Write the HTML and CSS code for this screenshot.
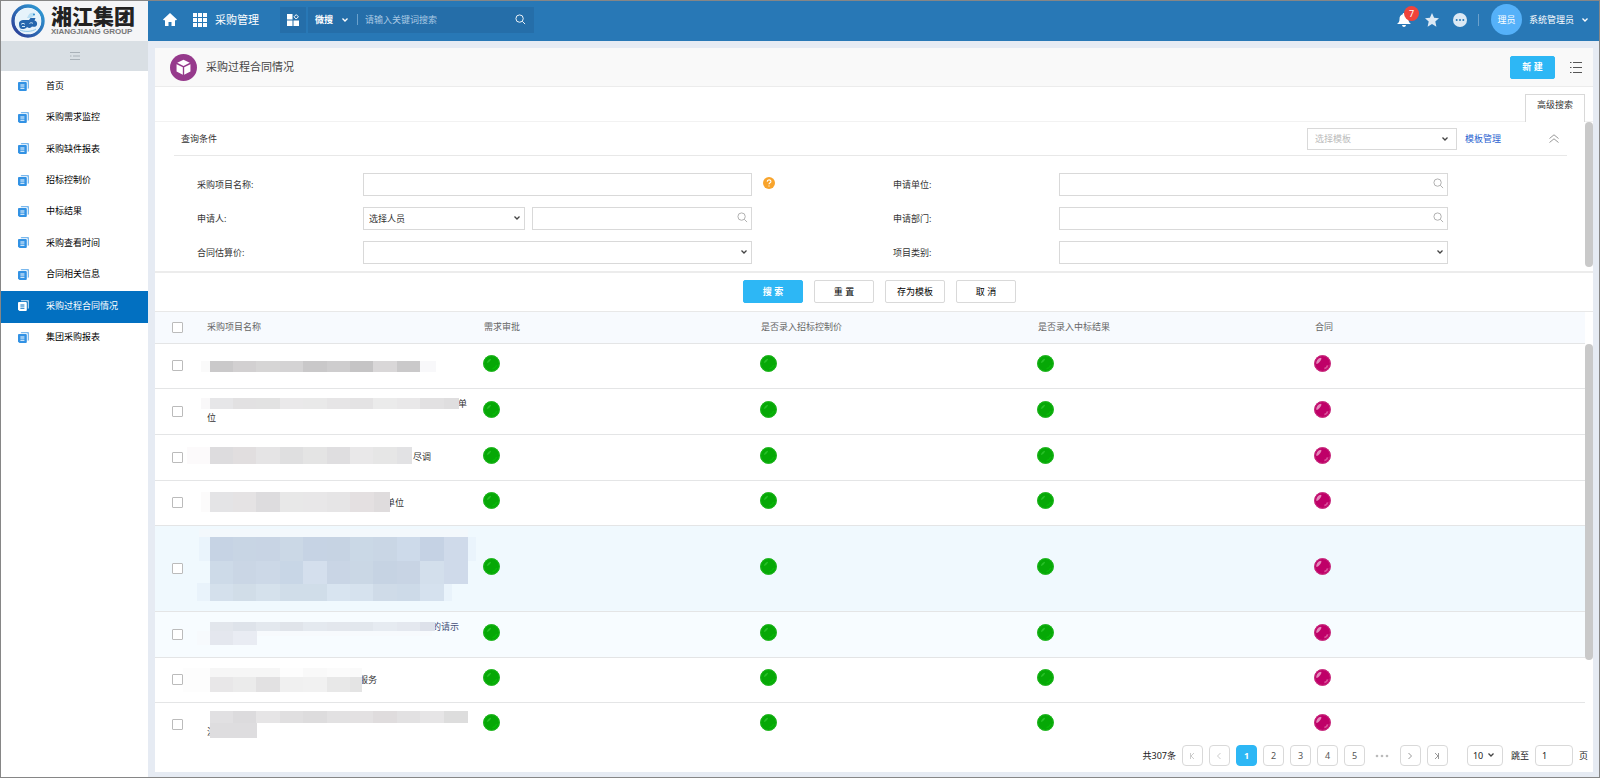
FILE: index.html
```html
<!DOCTYPE html>
<html lang="zh-CN">
<head>
    <meta charset="UTF-8">
    <meta name="viewport" content="width=device-width, initial-scale=1.0">
    <title>采购过程合同情况</title>
    <link rel="stylesheet" href="styles.css">
</head>
<body>
    <!-- Shared icons -->
    <svg class="sprite" width="0" height="0" aria-hidden="true">
        <symbol id="i-doc" viewBox="0 0 12 12">
            <path d="M4 0h7a1 1 0 0 1 1 1v7.500a1 1 0 0 1-1 1h-.4V2.200a.8.8 0 0 0-.8-.8H3V1a1 1 0 0 1 1-1z" opacity=".65"/>
            <path fill-rule="evenodd" d="M1 2.200h7.600a1 1 0 0 1 1 1V11a1 1 0 0 1-1 1H1.700L0 10.500V3.200a1 1 0 0 1 1-1zM2.600 5v.9H7V5zm0 2v.9H7V7zm0 2v.9H7V9z"/>
        </symbol>
        <symbol id="i-down" viewBox="0 0 8 8">
            <path d="M1.500 2.500L4 5l2.500-2.500" fill="none" stroke="currentColor" stroke-width="1.300"/>
        </symbol>
        <symbol id="i-search" viewBox="0 0 12 12">
            <circle cx="5" cy="5" r="4" fill="none" stroke="currentColor"/>
            <path d="M8 8l3 3" fill="none" stroke="currentColor"/>
        </symbol>
        <symbol id="i-green" viewBox="0 0 18 18">
            <circle cx="9" cy="9" r="8.800" fill="#06a806"/>
            <circle cx="9" cy="9" r="8.300" fill="none" stroke="#22b822" stroke-width="1"/>
            <path d="M4 8.500c.5-2.500 2-4 4.500-4.500C9 5 6 8.500 4 8.500z" fill="#28c028"/>
            <path d="M10 14.500c2.500-.5 4-2 4.500-4" fill="none" stroke="#08b808" stroke-width="1.500"/>
        </symbol>
        <symbol id="i-pink" viewBox="0 0 18 18">
            <circle cx="9" cy="9" r="8.800" fill="#bf0068"/>
            <circle cx="9" cy="9" r="8.300" fill="none" stroke="#c93582" stroke-width="1"/>
            <path d="M2.500 9.500C2 6 4.500 3 7.500 2.800c1.500 1-2.500 6.700-5 6.700z" fill="#e48abc"/>
            <path d="M11 14.500c2-.5 3-1.500 3.500-3.500" fill="none" stroke="#d9509a" stroke-width="2"/>
        </symbol>
    </svg>

    <div class="app">
        <aside class="sidebar">
            <div class="logo">
                <svg width="34" height="34" viewBox="0 0 34 34" aria-hidden="true">
                    <defs>
                        <linearGradient id="ring" x1="0" y1="1" x2="1" y2="0">
                            <stop offset="0" stop-color="#2b3a94"/>
                            <stop offset="1" stop-color="#2ea0d8"/>
                        </linearGradient>
                    </defs>
                    <circle cx="17" cy="17" r="15" fill="#fff" stroke="url(#ring)" stroke-width="3.400"/>
                    <circle cx="17" cy="17" r="13" fill="#e6f3fb"/>
                    <path d="M17 12c1-3 4-4 6-3 1 2-1 4-3 5h-4z" fill="#b9def3"/>
                    <path d="M8 20c0-3 2-4 5-4h5l1.500-2h5l-1 2.500c2 .5 3 2 2.500 4.500-1 2-3 2-5 1.500-1 1.500-3 2-5 .5-1 1.500-2.500 2-4.500 2-2.500 0-3.500-2-3.500-5z" fill="#2566ad"/>
                    <path d="M10 20.500c1-1.500 3-1.500 4 0M18.500 19.500c1-1 2.500-1 3.500 0M11 22.500h3" fill="none" stroke="#cfe8f7" stroke-width="1"/>
                    <path d="M9 26c4 2 12 2 16-1" fill="none" stroke="#8cc6e8" stroke-width="1"/>
                    <circle cx="23" cy="10.500" r="1" fill="#2a8fd0"/>
                </svg>
                <div class="logo-text">
                    <div class="logo-cn">湘江集团</div>
                    <div class="logo-en">XIANGJIANG GROUP</div>
                </div>
            </div>
            <button class="collapse" aria-label="收起菜单">
                <svg width="10" height="8" viewBox="0 0 10 8"><path d="M0 .5h10M3 4h7M0 7.500h10M0 4h1.500" stroke="#a9b1b8" fill="none"/></svg>
            </button>
            <nav class="menu">
                <a href="#"><svg><use href="#i-doc"/></svg>首页</a>
                <a href="#"><svg><use href="#i-doc"/></svg>采购需求监控</a>
                <a href="#"><svg><use href="#i-doc"/></svg>采购缺件报表</a>
                <a href="#"><svg><use href="#i-doc"/></svg>招标控制价</a>
                <a href="#"><svg><use href="#i-doc"/></svg>中标结果</a>
                <a href="#"><svg><use href="#i-doc"/></svg>采购查看时间</a>
                <a href="#"><svg><use href="#i-doc"/></svg>合同相关信息</a>
                <a href="#" class="active"><svg><use href="#i-doc"/></svg>采购过程合同情况</a>
                <a href="#"><svg><use href="#i-doc"/></svg>集团采购报表</a>
            </nav>
        </aside>

        <div class="main">
            <header class="topbar">
                <a href="#" class="home" aria-label="首页">
                    <svg width="14" height="13" viewBox="0 0 14 13"><path d="M7 0l7 6.500-.8.8H12V13H8.500V9h-3v4H2V7.300H.8L0 6.500z" fill="#fff"/></svg>
                </a>
                <a href="#" class="module">
                    <svg width="14" height="14" viewBox="0 0 14 14" fill="#fff"><path d="M0 0h4v4H0zM5 0h4v4H5zM10 0h4v4h-4zM0 5h4v4H0zM5 5h4v4H5zM10 5h4v4h-4zM0 10h4v4H0zM5 10h4v4H5zM10 10h4v4h-4z"/></svg>
                    采购管理
                </a>
                <div class="quick">
                    <button class="quick-app" aria-label="应用">
                        <svg width="12" height="12" viewBox="0 0 12 12"><path d="M0 0h5.500v5.500H0zM0 6.500h5.500V12H0zM6.500 6.500H12V12H6.500z" fill="#fff"/><path d="M9.200.6l2.200 2.200-2.200 2.200L7 2.800z" fill="none" stroke="#fff"/></svg>
                    </button>
                    <form class="quick-search">
                        <button type="button" class="quick-type">微搜 <svg width="8" height="8"><use href="#i-down"/></svg></button>
                        <input type="text" placeholder="请输入关键词搜索" aria-label="请输入关键词搜索">
                        <button type="button" class="quick-go" aria-label="搜索"><svg width="11" height="11"><use href="#i-search"/></svg></button>
                    </form>
                </div>
                <div class="user">
                    <button class="bell" aria-label="消息">
                        <svg width="14" height="14" viewBox="0 0 14 14"><path d="M7 0c.8 0 1.300.5 1.300 1.200C10.500 1.800 11.500 3.500 11.500 6c0 2.500.7 3.700 2.500 5H0c1.800-1.300 2.500-2.500 2.500-5 0-2.500 1-4.200 3.200-4.800C5.700.5 6.200 0 7 0zM5 12h4c-.2 1.200-1 2-2 2s-1.800-.8-2-2z" fill="#fff"/></svg>
                        <span class="badge">7</span>
                    </button>
                    <button aria-label="收藏">
                        <svg width="14" height="14" viewBox="0 0 14 14"><path d="M7 0l2.100 4.700 4.900.5-3.700 3.400 1.100 5.100L7 11.100l-4.400 2.600 1.100-5.100L0 5.200l4.900-.5z" fill="#dce9f4"/></svg>
                    </button>
                    <button aria-label="更多">
                        <svg width="14" height="14" viewBox="0 0 14 14"><circle cx="7" cy="7" r="7" fill="#dce9f4"/><g fill="#2878b6"><circle cx="3.700" cy="7" r="1"/><circle cx="7" cy="7" r="1"/><circle cx="10.300" cy="7" r="1"/></g></svg>
                    </button>
                    <span class="divider"></span>
                    <span class="avatar">理员</span>
                    <button class="username">系统管理员 <svg width="8" height="8"><use href="#i-down"/></svg></button>
                </div>
            </header>

            <main class="panel">
                <div class="title-bar">
                    <svg width="27" height="27" viewBox="0 0 28 28" aria-hidden="true">
                        <circle cx="14" cy="14" r="14" fill="#963a8c"/>
                        <path d="M14 6l6.500 3.200L14 12.500 7.500 9.200zM6.800 10.600l6.500 3.200V21.500l-6.500-3.300zM21.200 10.600v7.600l-6.500 3.300v-7.700z" fill="#fff"/>
                    </svg>
                    <h1>采购过程合同情况</h1>
                    <button class="btn primary create">新 建</button>
                    <button class="more" aria-label="更多操作">
                        <svg width="12" height="11" viewBox="0 0 12 11"><path d="M0 .5h1.500M3 .5h9M0 5.500h1.500M3 5.500h9M0 10.500h1.500M3 10.500h9" stroke="#555"/></svg>
                    </button>
                </div>
                <div class="tabs"><button class="tab">高级搜索</button></div>

                <form class="search">
                    <div class="search-head">
                        <span>查询条件</span>
                        <div class="template">
                            <div class="field">
                                <select aria-label="选择模板"><option>选择模板</option></select>
                                <svg class="arrow"><use href="#i-down"/></svg>
                            </div>
                            <a href="#">模板管理</a>
                            <button type="button" class="fold" aria-label="收起">
                                <svg width="10" height="9" viewBox="0 0 10 9"><path d="M.5 4.500L5 .8l4.500 3.700M.5 8.500L5 4.800l4.500 3.700" stroke="#999" fill="none"/></svg>
                            </button>
                        </div>
                    </div>
                    <div class="conditions">
                        <label for="project">采购项目名称:</label>
                        <div class="field"><input type="text" id="project"></div>
                        <svg class="help" width="12" height="12" viewBox="0 0 12 12" aria-hidden="true"><circle cx="6" cy="6" r="6" fill="#f8a42c"/><path d="M4.200 4.700C4.200 2.300 7.900 2.300 7.900 4.500 7.900 5.800 6 5.800 6 7.300M6 8.500v1.100" stroke="#fff" fill="none" stroke-width="1.100"/></svg>
                        <label for="unit" class="right">申请单位:</label>
                        <div class="field"><input type="text" id="unit"><svg class="lens"><use href="#i-search"/></svg></div>

                        <label for="applicant">申请人:</label>
                        <div class="pair">
                            <div class="field kind">
                                <select aria-label="人员类型"><option>选择人员</option></select>
                                <svg class="arrow"><use href="#i-down"/></svg>
                            </div>
                            <div class="field"><input type="text" id="applicant"><svg class="lens"><use href="#i-search"/></svg></div>
                        </div>
                        <label for="dept" class="right">申请部门:</label>
                        <div class="field"><input type="text" id="dept"><svg class="lens"><use href="#i-search"/></svg></div>

                        <label for="price">合同估算价:</label>
                        <div class="field"><select id="price"><option></option></select><svg class="arrow"><use href="#i-down"/></svg></div>
                        <label for="type" class="right">项目类别:</label>
                        <div class="field"><select id="type"><option></option></select><svg class="arrow"><use href="#i-down"/></svg></div>
                    </div>
                    <div class="scroll-thumb"></div>
                </form>

                <div class="actions">
                    <button class="btn primary">搜 索</button>
                    <button class="btn">重 置</button>
                    <button class="btn">存为模板</button>
                    <button class="btn">取 消</button>
                </div>

                <div class="list">
                    <table>
                        <colgroup><col class="col-check"><col><col><col><col><col></colgroup>
                        <thead>
                            <tr>
                                <th><input type="checkbox" aria-label="全选"></th>
                                <th>采购项目名称</th>
                                <th>需求审批</th>
                                <th>是否录入招标控制价</th>
                                <th>是否录入中标结果</th>
                                <th>合同</th>
                            </tr>
                        </thead>
                        <tbody id="rows"></tbody>
                    </table>
                    <div class="scroll-thumb"></div>
                </div>

                <div class="pager">
                    <span class="total">共307条</span>
                    <button class="page off" aria-label="首页"><svg width="8" height="8" viewBox="0 0 8 8"><path d="M2.500 1v6M6 1L3 4l3 3"/></svg></button>
                    <button class="page off" aria-label="上一页"><svg width="8" height="8" viewBox="0 0 8 8"><path d="M5.500 1l-3 3 3 3"/></svg></button>
                    <button class="page current">1</button>
                    <button class="page">2</button>
                    <button class="page">3</button>
                    <button class="page">4</button>
                    <button class="page">5</button>
                    <span class="dots"><svg width="14" height="4" viewBox="0 0 14 4" fill="#bbb"><circle cx="2" cy="2" r="1.300"/><circle cx="7" cy="2" r="1.300"/><circle cx="12" cy="2" r="1.300"/></svg></span>
                    <button class="page" aria-label="下一页"><svg width="8" height="8" viewBox="0 0 8 8"><path d="M2.500 1l3 3-3 3"/></svg></button>
                    <button class="page" aria-label="末页"><svg width="8" height="8" viewBox="0 0 8 8"><path d="M2 1l3 3-3 3M5.500 1v6"/></svg></button>
                    <div class="field size">
                        <select aria-label="每页条数"><option>10</option></select>
                        <svg class="arrow"><use href="#i-down"/></svg>
                    </div>
                    <label for="jump">跳至</label>
                    <input type="text" id="jump" value="1">
                    <span>页</span>
                </div>
            </main>
        </div>
    </div>

    <script>
        // strip: [x, y, width of a block, height, colours]
        // space: room kept before the visible tail of the project name
        const rows = [
            { height: 45, space: 230, strips: [
                [-6, 2, 9, 11, ['#fafafa']],
                [3, 2, 23.400, 11, ['#cac9ca', '#d2d0d1', '#d6d5d5', '#d4d3d4', '#c9c8c9', '#cecdce', '#c5c4c5', '#d9d7d8', '#cac9ca']],
                [213, 2, 16, 11, ['#f8f8fa']] ] },
            { height: 46, space: 251, tail: '单', next: '位', strips: [
                [-6, 1, 9, 11, ['#f9f8f9']],
                [3, 1, 23.400, 11, ['#e6e6e8', '#e2e1e2', '#e2e2e2', '#eae9ea', '#e9e9e9', '#e6e5e6', '#e4e3e4', '#ebebeb', '#e9e8e9', '#e2e1e2']],
                [237, 1, 15, 11, ['#dfdedf']] ] },
            { height: 46, space: 206, tail: '尽调', strips: [
                [-20, -3, 23, 17, ['#fcfafb']],
                [3, -3, 23.400, 17, ['#dddcde', '#e1dedf', '#e5e4e5', '#dfdfe0', '#e4e4e4', '#dfdee0', '#e9e8e9', '#e6e6e6']],
                [190, -3, 15, 17, ['#e2e2e4']] ] },
            { height: 45, space: 179, tail: '单位', strips: [
                [-6, -4, 9, 20, ['#fcfbfb']],
                [3, -4, 23.400, 20, ['#e4e4e6', '#e5e3e4', '#dddcde', '#e8e8e8', '#e8e7e8', '#e6e5e6', '#e4e0e1']],
                [167, -4, 16, 20, ['#dfdcdd']] ] },
            { height: 86, space: 250, cls: 'hover', strips: [
                [-8, -32, 269, 8, ['#f3f8fc']],
                [-8, -24, 277, 24, ['#eaf4fc']],
                [-10, 22, 255, 18, ['#e9f3fb']],
                [3, -24, 23.400, 24, ['#c6d3e4', '#c8d5e4', '#c8d4e4', '#cbd8e6', '#c6d3e4', '#c6d3e3', '#cad8e6', '#c9d6e5', '#cddaea', '#c5d2e4', '#cfdaea']],
                [3, 0, 23.400, 23, ['#cddae8', '#cad6e5', '#ccd8e7', '#c8d6e6', '#d4dfed', '#c9d5e5', '#cad7e5', '#c6d3e3', '#c8d4e4', '#d3dfec', '#cfdaea']],
                [3, 23, 23.400, 17, ['#d4e0ec', '#d1dde8', '#d5e1ec', '#d0dde9', '#d0dde9', '#d8e4f0', '#d6e2ee', '#cfdbe8', '#cddae8', '#d5e1ee']] ] },
            { height: 46, space: 225, cls: 'soft', tail: '的请示', next: ' ', strips: [
                [-10, 11, 235, 5, ['#f7fafd']],
                [-10, 16, 13, 9, ['#f7fafd']],
                [3, 2, 23.400, 9, ['#e2e6ec', '#dee3ea', '#e3e8ee', '#e0e4ea', '#e4e9ef', '#e3e7ed', '#e2e7ed', '#e6ebf1', '#e4e8ef']],
                [213, 2, 15, 9, ['#dde1ea']],
                [3, 11, 23.400, 14, ['#e4e7ee', '#e9ecf3']] ] },
            { height: 45, space: 152, tail: '服务', strips: [
                [-24, -5, 27, 24, ['#fdfdfd']],
                [3, -5, 23.400, 9, ['#f6f6f6', '#f6f6f6', '#f6f6f6', '#fdfdfd', '#f9f9f9', '#fbfbfb']],
                [143, -5, 12, 9, ['#fafafa']],
                [3, 4, 23.400, 15, ['#e8e7e8', '#ebebeb', '#e2e1e2', '#f0f0f0', '#f1f1f1', '#e8e8e8']],
                [143, 4, 12, 15, ['#e4e4e4']] ] },
            { height: 45, space: 250, next: '注', strips: [
                [3, 0, 23.400, 12, ['#e1e0e2', '#dcdbdd', '#e6e5e6', '#e0dfe0', '#dddcdd', '#e2e1e2', '#e3e1e2', '#dfdcdd', '#e2e1e2', '#e6e5e6', '#dddddd']],
                [3, 12, 23.400, 15, ['#dedddf', '#dedddf']] ] }
        ];

        function drawStrips(row) {
            let rects = '';
            row.strips.forEach(function([x, y, w, h, colors]) {
                colors.forEach(function(color, i) {
                    rects += `<rect x="${Math.floor(x + w * i)}" y="${y}" width="${Math.ceil(w)}" height="${h}" fill="${color}"/>`;
                });
            });
            return `<svg class="mask" width="${row.space}" height="14">${rects}</svg>`;
        }

        const dot = name => `<td class="state"><svg width="17" height="17"><use href="#i-${name}"/></svg></td>`;

        document.getElementById('rows').innerHTML = rows.map(row => `
            <tr class="${row.cls || ''}" style="height: ${row.height}px">
                <td><input type="checkbox" aria-label="选择"></td>
                <td class="name"><div>${drawStrips(row)}${row.tail || ''}</div>${row.next ? `<div class="second">${row.next}</div>` : ''}</td>
                ${dot('green')}${dot('green')}${dot('green')}${dot('pink')}
            </tr>`).join('');
    </script>
</body>
</html>
```

FILE: styles.css
```css
:root {
    --blue: #2878b6;
    --blue-dark: #256ea9;
    --active: #0270c1;
    --primary: #2db7f5;
    --line: #e8e8e8;
    --border: #d9d9d9;
    --gutter: #e6ebf3;
}

* {
    box-sizing: border-box;
    margin: 0;
    padding: 0;
}

body {
    font-family: "Noto Sans", "Noto Sans CJK SC", sans-serif;
    font-size: 9px;
    line-height: 14px;
    color: #333;
    background: var(--gutter);
}

button, input, select {
    font: inherit;
    color: inherit;
}

button {
    background: none;
    border: none;
    cursor: pointer;
}

a {
    color: inherit;
    text-decoration: none;
}

svg {
    display: block;
    flex: none;
}

.sprite {
    position: absolute;
}

.app {
    display: flex;
    height: 100vh;
    border: 1px solid #868686;
    overflow: hidden;
}

/* Sidebar */
.sidebar {
    flex: none;
    width: 147px;
    background: #fff;
    color: #000;
}

.logo {
    display: flex;
    align-items: center;
    gap: 6px;
    height: 40px;
    padding-left: 10px;
    background: #f4f5f7;
}

.logo-cn {
    font-size: 21px;
    font-weight: 900;
    line-height: 22px;
    color: #222;
}

.logo-en {
    font-family: "Liberation Sans", Arial, sans-serif;
    font-size: 8px;
    font-weight: bold;
    line-height: 10px;
    color: #777;
    white-space: nowrap;
}

.collapse {
    display: flex;
    align-items: center;
    justify-content: center;
    width: 100%;
    height: 30px;
    background: #d9dfe4;
}

.menu {
    display: flex;
    flex-direction: column;
    height: 283px;
}

.menu a {
    flex: 1;
    display: flex;
    align-items: center;
    gap: 17px;
    padding: 0 0 2px 17px;
}

.menu svg {
    width: 11px;
    height: 11px;
    fill: #3292e4;
}

.menu .active {
    background: var(--active);
    color: #fff;
}

.menu .active svg {
    fill: #fff;
}

/* Top bar */
.main {
    flex: 1;
    display: flex;
    flex-direction: column;
    min-width: 0;
}

.topbar {
    flex: none;
    display: flex;
    align-items: center;
    height: 40px;
    padding: 0 10px 3px 15px;
    background: var(--blue);
    color: #fff;
}

.module {
    display: flex;
    align-items: center;
    gap: 8px;
    margin-left: 16px;
    font-size: 11px;
}

.quick {
    display: flex;
    gap: 2px;
    height: 26px;
    margin-left: 21px;
}

.quick-app {
    width: 26px;
    padding-left: 7px;
    background: var(--blue-dark);
}

.quick-search {
    display: flex;
    align-items: center;
    width: 226px;
    padding-left: 7px;
    background: var(--blue-dark);
}

.quick-type {
    display: flex;
    align-items: center;
    gap: 8px;
    padding-right: 8px;
    border-right: 1px solid #6ba1cc;
    font-weight: bold;
    line-height: 11px;
}

.quick-search input {
    flex: 1;
    min-width: 0;
    padding-left: 7px;
    border: none;
    background: none;
}

.quick-search input::placeholder {
    color: #a9c9e3;
}

.quick-go {
    padding-right: 8px;
}

.user {
    display: flex;
    align-items: center;
    gap: 14px;
    margin-left: auto;
}

.bell {
    position: relative;
}

.badge {
    position: absolute;
    top: -7px;
    left: 7px;
    width: 15px;
    height: 15px;
    border-radius: 50%;
    background: #f0433a;
    line-height: 15px;
    text-align: center;
}

.divider {
    width: 1px;
    height: 12px;
    margin: 0 -2px 0 -3px;
    background: #6ba1cc;
}

.avatar {
    width: 31px;
    height: 31px;
    margin-right: -7px;
    border-radius: 50%;
    background: #55b1f9;
    line-height: 31px;
    text-align: center;
}

.username {
    display: flex;
    align-items: center;
    gap: 7px;
}

/* Panel */
.panel {
    flex: 1;
    display: flex;
    flex-direction: column;
    min-height: 0;
    margin: 7px 6px 5px 7px;
    background: #fff;
}

.title-bar {
    flex: none;
    display: flex;
    align-items: center;
    height: 39px;
    padding: 0 11px 0 15px;
    border-bottom: 1px solid #ececec;
    background: #f9f9f9;
}

.title-bar h1 {
    margin-left: 9px;
    font-size: 11px;
    font-weight: normal;
    color: #444;
}

.btn {
    width: 60px;
    height: 23px;
    border: 1px solid var(--border);
    border-radius: 2px;
    background: #fff;
    color: #000;
}

.primary {
    border-color: var(--primary);
    background: var(--primary);
    color: #fff;
    font-weight: bold;
}

.create {
    width: 45px;
    margin-left: auto;
}

.more {
    margin-left: 15px;
}

.tabs {
    flex: none;
    display: flex;
    justify-content: flex-end;
    height: 35px;
    padding: 7px 8px 0 0;
    border-bottom: 1px solid #f2f2f2;
}

.tab {
    width: 60px;
    height: 28px;
    padding-bottom: 8px;
    border: 1px solid var(--border);
    border-bottom: none;
    background: #fff;
}

/* Search form */
.search {
    flex: none;
    position: relative;
    padding: 0 26px 0 19px;
    border-bottom: 2px solid #ececec;
}

.search-head {
    display: flex;
    align-items: center;
    justify-content: space-between;
    height: 34px;
    padding: 0 8px 0 7px;
    border-bottom: 1px solid var(--line);
}

.template {
    display: flex;
    align-items: center;
    color: #2a5fd0;
}

.template .field {
    width: 150px;
    margin-right: 8px;
}

.template .field select {
    height: 22px;
    padding-left: 7px;
    color: #bbb;
}

.fold {
    margin-left: 48px;
}

/* label, field, help icon, label, field */
.conditions {
    display: grid;
    grid-template-columns: 166px 1fr 141px 166px 1fr;
    row-gap: 11px;
    align-items: center;
    padding: 17px 119px 7px 23px;
}

.conditions .right {
    grid-column: 4;
}

.pair {
    display: flex;
    gap: 7px;
}

.pair .field {
    flex: 1;
}

.pair .kind {
    flex: none;
    width: 162px;
}

.help {
    margin: -4px 0 0 11px;
}

.field {
    position: relative;
}

.field input, .field select {
    display: block;
    width: 100%;
    height: 23px;
    padding: 0 5px;
    border: 1px solid var(--border);
    background: #fff;
    appearance: none;
}

.arrow {
    position: absolute;
    top: 7px;
    right: 4px;
    width: 8px;
    height: 8px;
    color: #444;
    pointer-events: none;
}

.template .arrow {
    right: 8px;
}

.lens {
    position: absolute;
    top: 5px;
    right: 4px;
    width: 11px;
    height: 11px;
    color: #aaa;
}

.scroll-thumb {
    position: absolute;
    top: 0;
    right: 0;
    width: 8px;
    height: 145px;
    border-radius: 4px;
    background: #c9c9c9;
}

.actions {
    flex: none;
    display: flex;
    justify-content: center;
    gap: 11px;
    padding: 7px 0 8px 11px;
}

/* Table */
.list {
    flex: 1;
    position: relative;
    min-height: 0;
    overflow: hidden;
    padding-right: 8px;
    border-top: 1px solid var(--line);
}

.list .scroll-thumb {
    top: 32px;
    height: 316px;
}

table {
    width: 100%;
    table-layout: fixed;
    border-collapse: collapse;
}

.col-check {
    width: 45px;
}

th {
    height: 31px;
    padding-left: 7px;
    background: #f7fafe;
    color: #666;
    font-weight: normal;
    text-align: left;
}

td {
    padding: 0 0 0 7px;
    vertical-align: middle;
}

tr {
    border-bottom: 1px solid #e4e5e6;
}

tr > :first-child {
    padding-left: 17px;
}

input[type="checkbox"] {
    display: block;
    width: 11px;
    height: 11px;
    border: 1px solid #bbb;
    border-radius: 1px;
    background: #fff;
    appearance: none;
}

.hover {
    background: #f0f9fe;
}

.soft {
    background: #f7fcff;
    color: #45507a;
}

.name div {
    display: flex;
    height: 14px;
    white-space: nowrap;
}

.mask {
    position: relative;
    z-index: 1;
    overflow: visible;
    shape-rendering: crispEdges;
}

.state {
    padding: 0 0 4px 6px;
}

/* Pagination */
.pager {
    flex: none;
    display: flex;
    align-items: center;
    gap: 6px;
    justify-content: flex-end;
    padding: 5px 5px 6px;
    color: #222;
}

.page {
    display: flex;
    align-items: center;
    justify-content: center;
    width: 21px;
    height: 21px;
    border: 1px solid var(--border);
    border-radius: 4px;
    color: #555;
}

.page svg {
    fill: none;
    stroke: #999;
}

.off svg {
    stroke: #ccc;
}

.current {
    border-color: var(--primary);
    background: var(--primary);
    color: #fff;
    font-weight: bold;
}

.dots {
    margin: 0 5px 0 4px;
}

.size {
    width: 36px;
    margin: 0 2px 0 13px;
}

.size select, #jump {
    height: 21px;
    border: 1px solid var(--border);
    border-radius: 4px;
}

.size .arrow {
    top: 6px;
    right: 8px;
}

#jump {
    width: 38px;
    padding-left: 6px;
}
```
